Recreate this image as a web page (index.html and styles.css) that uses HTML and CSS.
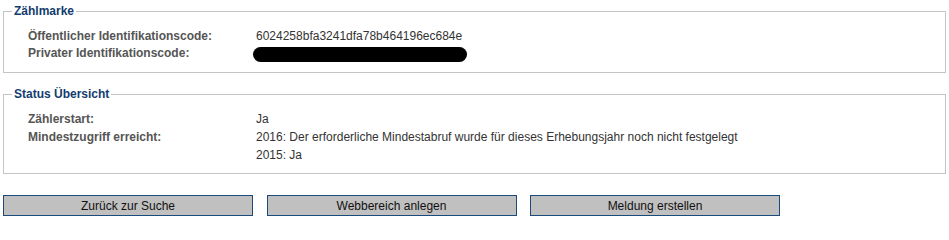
FILE: index.html
```html
<!DOCTYPE html>
<html lang="de">
<head>
<meta charset="utf-8">
<title>Zählmarke</title>
<link rel="stylesheet" href="styles.css">
</head>
<body>
<div class="page">
  <fieldset class="box box-first">
    <legend class="box-title">Zählmarke</legend>
    <div class="rows rows-tight">
      <div class="row">
        <div class="label">Öffentlicher Identifikationscode:</div>
        <div class="value">6024258bfa3241dfa78b464196ec684e</div>
      </div>
      <div class="row">
        <div class="label">Privater Identifikationscode:</div>
        <div class="value"><span class="redacted"></span></div>
      </div>
    </div>
  </fieldset>
  <fieldset class="box box-second">
    <legend class="box-title">Status Übersicht</legend>
    <div class="rows rows-loose">
      <div class="row">
        <div class="label">Zählerstart:</div>
        <div class="value">Ja</div>
      </div>
      <div class="row">
        <div class="label">Mindestzugriff erreicht:</div>
        <div class="value">
          <div>2016: Der erforderliche Mindestabruf wurde für dieses Erhebungsjahr noch nicht festgelegt</div>
          <div>2015: Ja</div>
        </div>
      </div>
    </div>
  </fieldset>
  <div class="actions">
    <button class="btn" type="button">Zurück zur Suche</button>
    <button class="btn" type="button">Webbereich anlegen</button>
    <button class="btn" type="button">Meldung erstellen</button>
  </div>
</div>
</body>
</html>
```
FILE: styles.css
```css
html, body {
  margin: 0;
  padding: 0;
  background: #ffffff;
}
body {
  font-family: "Liberation Sans", Arial, Helvetica, sans-serif;
  font-size: 12px;
  color: #333333;
}
.page {
  padding: 0 3px;
}
.box {
  margin: 0;
  border: 1px solid #c4c4c4;
  padding: 0 0 0 8px;
  min-width: 0;
}
.box-first {
  margin-top: 4px;
}
.box-second {
  margin-top: 14px;
}
.box-title {
  padding: 0 2px;
  font-size: 12px;
  line-height: 14px;
  font-weight: bold;
  color: #123d6e;
}
.rows {
  padding-left: 16px;
}
.rows-tight {
  padding-top: 10px;
  padding-bottom: 10px;
  line-height: 17px;
}
.rows-loose {
  padding-top: 9px;
  padding-bottom: 9px;
  line-height: 18px;
}
.row {
  display: flex;
}
.label {
  width: 228px;
  flex: none;
  font-weight: bold;
  color: #555555;
}
.value {
  color: #333333;
}
.redacted {
  display: inline-block;
  vertical-align: top;
  margin: 2px 0 0 -3px;
  width: 214px;
  height: 15px;
  border-radius: 8px;
  background: #000000;
}
.actions {
  display: flex;
  gap: 13.5px;
  margin-top: 21px;
}
.btn {
  width: 250px;
  height: 21px;
  margin: 0;
  padding: 0;
  border: 1px solid #1b4a7d;
  border-radius: 0;
  background: #c0c0c0;
  font-family: "Liberation Sans", Arial, Helvetica, sans-serif;
  font-size: 12px;
  color: #111111;
}
```
